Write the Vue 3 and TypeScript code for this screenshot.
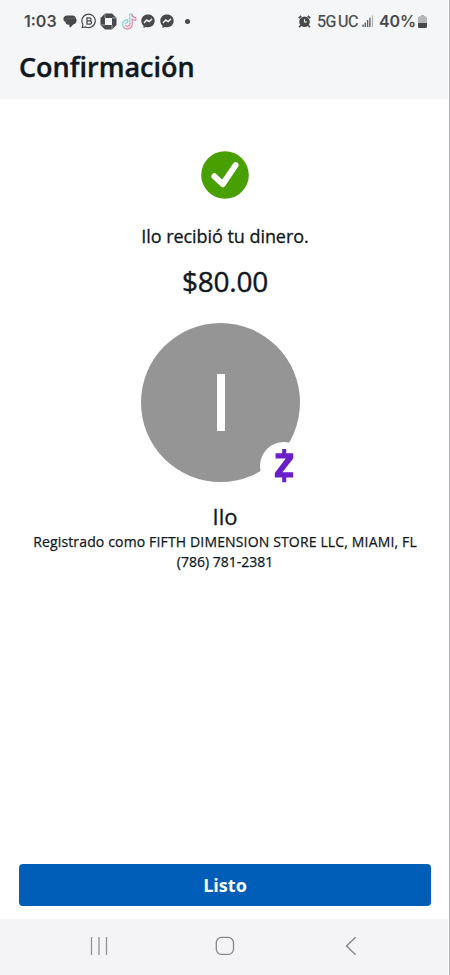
<script setup lang="ts">
interface Recipient {
  name: string
  registeredAs: string
  phone: string
}

const recipient: Recipient = {
  name: 'Ilo',
  registeredAs: 'FIFTH DIMENSION STORE LLC, MIAMI, FL',
  phone: '(786) 781-2381',
}
const amount = '$80.00'
</script>

<template>
  <div class="screen">
    <header class="header">
      <div class="status">
        <div class="status-left">
          <span class="time">1:03</span>
          <svg class="ic-chat" width="14" height="13" viewBox="0 0 14 13">
            <path d="M4.2 .5H9.8C11.6 .5 12.5 1.4 12.7 2.9 13.4 3.5 13.7 4.3 13.6 5.4 13.5 7.7 12.2 9 10.2 9.5L7.9 12C7.2 12.7 6.4 12.3 6.4 11.5V9.8H5.6C3.6 9.8 2.6 8.8 2.5 7.1 1.1 6.6.4 5.4.4 4 .4 1.8 2 .5 4.2 .5Z" fill="#48494b" />
            <path d="M2.8 6.5C3 4.7 4 3.6 6 3.5L12.2 3.2" fill="none" stroke="#77787a" stroke-width="0.5" />
          </svg>
          <svg class="ic-b" width="16" height="16" viewBox="0 0 16 16">
            <path d="M1.2 14.6L1.9 11.4A6.7 6.7 0 1 1 4.7 13.9Z" fill="none" stroke="#48494b" stroke-width="1.15" stroke-linejoin="round" />
            <path d="M6 4.8H8.5A1.5 1.5 0 0 1 8.5 7.8H6ZM6 7.8H8.9A1.6 1.6 0 0 1 8.9 11H6Z" fill="none" stroke="#48494b" stroke-width="1.25" />
          </svg>
          <svg class="ic-oct" width="17" height="17" viewBox="0 0 17 17">
            <path d="M5 .5H12L16.5 5V12L12 16.5H5L.5 12V5Z" fill="#48494b" />
            <path d="M5 5H12V12H5Z" fill="#f5f6f8" />
            <path d="M5 .5V5M16.5 5H12M12 16.5V12M.5 12H5" stroke="#c5c6c8" stroke-width=".7" />
          </svg>
          <svg class="ic-note" width="16" height="17" viewBox="0 0 16 17">
            <path d="M8.8 11V1H10.8C11 3 12.2 4.4 14.3 4.6M6.8 9.4V6.9C4 6.6 1.6 8.5 1.7 11.4 1.8 13 2.4 14 3.4 14.7M6.8 9.4C5.2 9 4 10 4.1 11.3" fill="none" stroke="#71d7d4" stroke-width="1.1" />
            <path d="M11 1.4C11.4 3.3 12.5 4.3 14.8 4.7V7.2C13.4 7.2 12 6.8 11.2 6.1V11.5C11 16 5 17 2.9 14.5M9.2 10.5C9 13.4 5.6 14 4.4 12.4" fill="none" stroke="#e77d9b" stroke-width="1.1" />
          </svg>
          <svg v-for="n in 2" :key="n" class="ic-msg" width="14" height="15" viewBox="0 0 14 15">
            <path d="M7 .4C3.2.4.3 3.1.3 6.8.3 8.8 1.1 10.5 2.5 11.7V14L4.7 12.9C5.4 13.2 6.2 13.3 7 13.3 10.8 13.3 13.7 10.5 13.7 6.8 13.7 3.1 10.8.4 7 .4Z" fill="#48494b" />
            <path d="M3.4 8.5L5.6 6L8.2 7.6L10.6 5.3" fill="none" stroke="#f5f6f8" stroke-width="1.5" stroke-linejoin="round" stroke-linecap="round" />
          </svg>
          <span class="dot"></span>
        </div>
        <div class="status-right">
          <svg class="ic-alarm" width="13" height="13" viewBox="0 0 13 13">
            <path d="M.8 3.2L3.2 1M12.2 3.2L9.8 1M2.8 10.2L1.2 12.3M10.2 10.2L11.8 12.3" stroke="#48494b" stroke-width="1.7" />
            <circle cx="6.5" cy="6.8" r="5.3" fill="#48494b" />
            <path d="M6.5 4.2V7H8.8" fill="none" stroke="#f5f6f8" stroke-width="1.1" />
          </svg>
          <span class="network">5G<span class="uc">UC</span></span>
          <svg class="ic-signal" width="12" height="12" viewBox="0 0 12 12">
            <path d="M1 9.5V12M3.3 7.5V12M5.6 5V12M7.9 2.8V12" stroke="#606163" stroke-width="1.4" />
            <path d="M10.5 .5V12" stroke="#b6b7b9" stroke-width="1.4" />
          </svg>
          <span class="percent">40%</span>
          <svg class="ic-battery" width="9" height="13" viewBox="0 0 9 13">
            <path d="M3 0H6V1.3H7.5Q9 1.3 9 3V8H0V3Q0 1.3 1.5 1.3H3Z" fill="#b4b5b7" />
            <path d="M0 8H9V11.5Q9 13 7.5 13H1.5Q0 13 0 11.5Z" fill="#48494b" />
          </svg>
        </div>
      </div>
      <h1 class="title">Confirmación</h1>
    </header>

    <main class="content">
      <svg class="check" width="48" height="48" viewBox="0 0 48 48">
        <circle cx="24" cy="24" r="23.8" fill="#48a000" />
        <path d="M13.4 25.3L21.7 33.2L34.6 14.1" fill="none" stroke="#fff" stroke-width="6" stroke-linecap="round" stroke-linejoin="round" />
      </svg>
      <p class="message">{{ recipient.name }} recibió tu dinero.</p>
      <p class="amount">{{ amount }}</p>
      <div class="avatar">
        <span class="initial"></span>
        <svg class="badge" width="48" height="48" viewBox="0 0 48 48">
          <circle cx="24" cy="24" r="24" fill="#fff" />
          <path d="M22.2 7H26.2V11.2H33.2V16.4L22.4 30.2H33.2V35.4H26.2V40.2H22.2V35.4H14.8V31L25.7 16.4H15.6V11.2H22.2Z" fill="#6a1fc9" />
        </svg>
      </div>
      <h2 class="name">{{ recipient.name }}</h2>
      <p class="detail registered">Registrado como {{ recipient.registeredAs }}</p>
      <p class="detail phone">{{ recipient.phone }}</p>
    </main>

    <div class="action">
      <button class="done" type="button"><span>Listo</span></button>
    </div>

    <nav class="navbar">
      <svg width="18" height="20" viewBox="0 0 18 20">
        <path d="M1.5 1V19M9 1V19M16.5 1V19" stroke="#929396" stroke-width="1.3" />
      </svg>
      <svg width="20" height="20" viewBox="0 0 20 20">
        <rect x="1.3" y="1.4" width="17.2" height="17" rx="5.2" fill="none" stroke="#858689" stroke-width="1.3" />
      </svg>
      <svg width="12" height="20" viewBox="0 0 12 20">
        <path d="M10.6 1.2L1.5 10L10.6 18.8" fill="none" stroke="#858689" stroke-width="1.4" />
      </svg>
    </nav>
  </div>
</template>

<style>
body {
  margin: 0;
  background: #fff;
}
</style>

<style scoped>
.screen {
  box-sizing: border-box;
  width: 450px;
  height: 975px;
  display: flex;
  flex-direction: column;
  background: #fff;
  border-right: 1px solid #b3b4b6;
  padding-right: 1px;
  font-family: "Open Sans", "Noto Sans", sans-serif;
  color: #10181f;
  overflow: hidden;
}
.header {
  height: 98.5px;
  flex: none;
  background: #f5f6f8;
}
.status {
  height: 42px;
  display: flex;
  justify-content: space-between;
  align-items: center;
  padding: 0 21px 0 24px;
  box-sizing: border-box;
  font-family: Inter, Roboto, sans-serif;
  color: #48494b;
}
.status-left,
.status-right {
  display: flex;
  align-items: center;
}
.time {
  width: 39px;
  font-size: 16px;
  font-weight: 600;
  white-space: nowrap;
}
.ic-b { margin-left: 4px; }
.ic-oct { margin-left: 3px; }
.ic-note { margin-left: 4px; }
.ic-msg { margin-left: 4px; }
.ic-msg + .ic-msg { margin-left: 5px; }
.dot {
  width: 5px;
  height: 5px;
  margin-left: 11px;
  border-radius: 50%;
  background: #48494b;
}
.network {
  width: 41px;
  margin-left: 6px;
  font-family: Roboto, sans-serif;
  font-size: 16px;
  -webkit-text-stroke: 0.25px currentColor;
  letter-spacing: -0.4px;
  white-space: nowrap;
}
.uc { margin-left: 2px; }
.ic-signal { margin-left: 4px; }
.percent {
  width: 37px;
  margin-left: 5px;
  font-size: 16px;
  font-weight: 600;
  letter-spacing: -0.1px;
  white-space: nowrap;
}
.ic-battery { margin-left: 2px; }
.title {
  margin: 6px 0 0 19px;
  font-size: 27px;
  line-height: 38px;
  font-weight: 600;
  -webkit-text-stroke: 0.4px currentColor;
}
.content {
  flex: 1;
  display: flex;
  flex-direction: column;
  align-items: center;
  padding: 52.5px 0 0 2px;
}
.check {
  display: block;
}
.message {
  margin: 23.5px 0 0;
  font-size: 18px;
  line-height: 26px;
  letter-spacing: -0.05px;
  -webkit-text-stroke: 0.3px currentColor;
}
.amount {
  margin: 13px 0 0;
  font-size: 28px;
  line-height: 38px;
  letter-spacing: -0.2px;
  -webkit-text-stroke: 0.4px currentColor;
}
.avatar {
  position: relative;
  width: 159px;
  height: 159px;
  margin: 23.5px 8px 0 0;
  display: flex;
  align-items: center;
  justify-content: center;
  border-radius: 50%;
  background: #959595;
}
.initial {
  width: 8px;
  height: 57px;
  background: #fff;
}
.badge {
  position: absolute;
  left: 119px;
  top: 119px;
}
.name {
  margin: 19px 0 0;
  font-size: 22px;
  line-height: 30px;
  font-weight: 400;
  -webkit-text-stroke: 0.3px currentColor;
}
.detail {
  margin: 0;
  font-size: 14px;
  line-height: 20px;
  white-space: nowrap;
  -webkit-text-stroke: 0.25px currentColor;
}
.registered {
  margin-top: 1px;
  letter-spacing: 0.15px;
}
.avatar {
  margin-right: 8.6px;
}
.action {
  flex: none;
  padding: 0 17px 13px 19px;
}
.done {
  width: 100%;
  height: 42px;
  display: flex;
  align-items: center;
  justify-content: center;
  padding: 0;
  border: 0;
  border-radius: 4px;
  background: #005eb8;
  color: #fff;
  font: 700 18px/24px "Open Sans", sans-serif;
}
.navbar {
  flex: none;
  height: 56px;
  box-sizing: border-box;
  display: flex;
  align-items: center;
  justify-content: space-between;
  padding: 0 91px 2px 90px;
  background: #f4f4f6;
}
.navbar svg:nth-child(2) {
  margin-right: 3px;
}
</style>
